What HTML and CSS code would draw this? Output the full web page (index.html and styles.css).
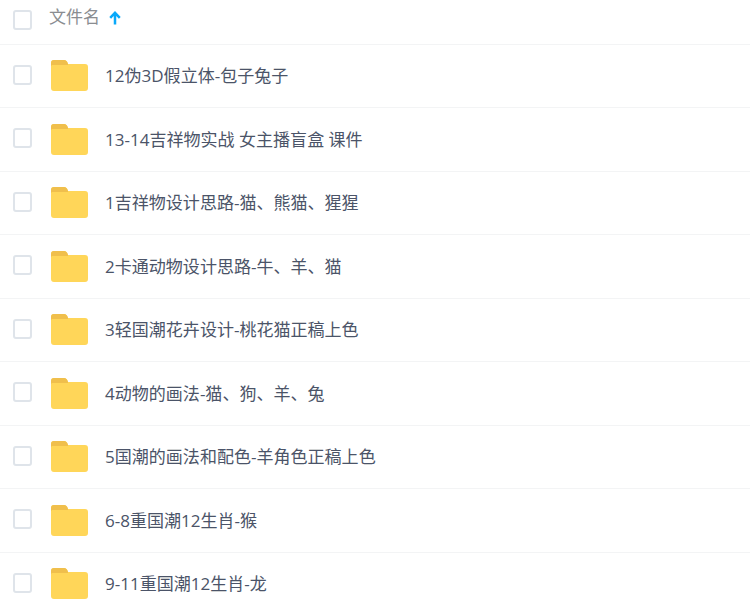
FILE: index.html
```html
<!DOCTYPE html>
<html lang="zh">
<head>
<meta charset="utf-8">
<title>文件列表</title>
<link rel="stylesheet" href="styles.css">
</head>
<body>
<svg class="defs" aria-hidden="true"><symbol id="folder" viewBox="0 0 37 31"><path d="M0 3a3 3 0 0 1 3-3h10c2 0 3 1 4 4h17a3 3 0 0 1 3 3v21a3 3 0 0 1-3 3H3a3 3 0 0 1-3-3z" fill="#ffd659"/><path d="M0 6V3a3 3 0 0 1 3-3h10c2 0 3 1 4 4v1H1z" fill="#f0bf4c"/></symbol></svg>
<div class="list">
  <div class="head">
    <span class="check"></span>
    <span class="head-name">文件名</span>
    <svg class="arrow" viewBox="0 0 12 14" width="12" height="14"><path d="M6 13.500V2M1.200 6.800 6 1.800l4.800 5" fill="none" stroke="#09a9fa" stroke-width="2.500"/></svg>
  </div>
  <div class="row"><span class="check"></span><svg class="folder"><use href="#folder"/></svg><span class="name">12伪3D假立体-包子兔子</span></div>
  <div class="row"><span class="check"></span><svg class="folder"><use href="#folder"/></svg><span class="name">13-14吉祥物实战 女主播盲盒 课件</span></div>
  <div class="row"><span class="check"></span><svg class="folder"><use href="#folder"/></svg><span class="name">1吉祥物设计思路-猫、熊猫、猩猩</span></div>
  <div class="row"><span class="check"></span><svg class="folder"><use href="#folder"/></svg><span class="name">2卡通动物设计思路-牛、羊、猫</span></div>
  <div class="row"><span class="check"></span><svg class="folder"><use href="#folder"/></svg><span class="name">3轻国潮花卉设计-桃花猫正稿上色</span></div>
  <div class="row"><span class="check"></span><svg class="folder"><use href="#folder"/></svg><span class="name">4动物的画法-猫、狗、羊、兔</span></div>
  <div class="row"><span class="check"></span><svg class="folder"><use href="#folder"/></svg><span class="name">5国潮的画法和配色-羊角色正稿上色</span></div>
  <div class="row"><span class="check"></span><svg class="folder"><use href="#folder"/></svg><span class="name">6-8重国潮12生肖-猴</span></div>
  <div class="row"><span class="check"></span><svg class="folder"><use href="#folder"/></svg><span class="name">9-11重国潮12生肖-龙</span></div>
</div>
</body>
</html>
```
FILE: styles.css
```css
html, body {
  margin: 0;
  padding: 0;
  background: #fff;
  overflow: hidden;
}
body {
  font-family: "Open Sans", "Noto Sans CJK SC", sans-serif;
}
.defs {
  display: none;
}
.list {
  width: 750px;
}
.head {
  box-sizing: border-box;
  height: 44.500px;
  display: flex;
  align-items: flex-start;
  padding: 10px 0 0 13px;
  border-bottom: 1px solid #f3f4f5;
}
.row {
  box-sizing: border-box;
  height: 63.500px;
  display: flex;
  align-items: center;
  padding-left: 13px;
  border-bottom: 1px solid #f3f4f5;
}
.check {
  box-sizing: border-box;
  flex: none;
  width: 19px;
  height: 20px;
  border: 2px solid #dfe4ea;
  border-radius: 3px;
  background: #fff;
}
.row .check {
  margin-top: -2px;
}
.head-name {
  margin: -5px 0 0 17px;
  font-size: 17px;
  line-height: 24px;
  color: #8a8d91;
}
.arrow {
  margin: 1px 0 0 9px;
}
.folder {
  flex: none;
  width: 37px;
  height: 31px;
  margin-left: 19px;
}
.name {
  margin: -2px 0 0 17px;
  font-size: 17.050px;
  color: #4b5468;
}
```
